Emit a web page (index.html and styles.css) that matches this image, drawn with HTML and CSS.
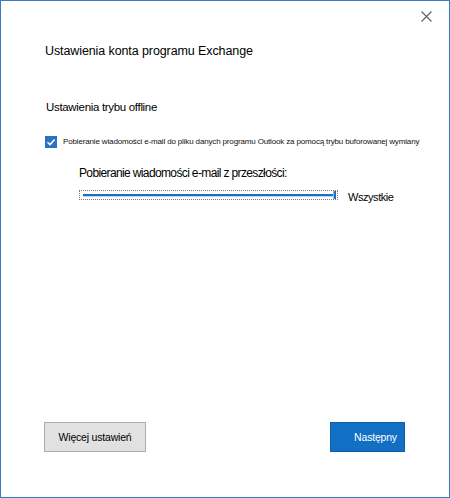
FILE: index.html
```html
<!DOCTYPE html>
<html lang="pl">
<head>
<meta charset="utf-8">
<title>Ustawienia konta programu Exchange</title>
<link rel="stylesheet" href="styles.css">
</head>
<body>
<div class="window">
  <button class="close" aria-label="Zamknij">
    <svg width="11" height="11" viewBox="0 0 11 11"><path d="M0.5 0.5L10.5 10.5M10.5 0.5L0.5 10.5" stroke="#5f5f5f" stroke-width="1.1" fill="none"/></svg>
  </button>
  <div class="content">
    <h1 class="title">Ustawienia konta programu Exchange</h1>
    <h2 class="subtitle">Ustawienia trybu offline</h2>
    <label class="check-row">
      <span class="checkbox">
        <svg width="12" height="12" viewBox="0 0 12 12"><path d="M2.5 6.2L5 8.6L9.6 3.6" stroke="#fff" stroke-width="1.5" fill="none"/></svg>
      </span>
      <span class="check-label">Pobieranie wiadomości e-mail do pliku danych programu Outlook za pomocą trybu buforowanej wymiany</span>
    </label>
    <div class="past">
      <div class="past-label">Pobieranie wiadomości e-mail z przeszłości:</div>
      <div class="slider-row">
        <div class="slider">
          <div class="track"></div>
          <div class="thumb"></div>
        </div>
        <span class="slider-value">Wszystkie</span>
      </div>
    </div>
  </div>
  <div class="footer">
    <button class="btn btn-secondary">Więcej ustawień</button>
    <button class="btn btn-primary">Następny</button>
  </div>
</div>
</body>
</html>
```
FILE: styles.css
```css
html, body {
  margin: 0;
  padding: 0;
  background: #ffffff;
}
body {
  font-family: "Liberation Sans", Arial, sans-serif;
  color: #000;
}
.window {
  position: relative;
  width: 450px;
  height: 498px;
  box-sizing: border-box;
  border: 1px solid #3a7ebf;
  background: #fff;
  display: flex;
  flex-direction: column;
}
.close {
  position: absolute;
  top: 9px;
  right: 16px;
  width: 13px;
  height: 13px;
  padding: 1px;
  border: 0;
  background: transparent;
  display: flex;
  align-items: center;
  justify-content: center;
}
.content {
  flex: 1;
  padding-left: 44px;
  padding-top: 42px;
}
.title {
  margin: 0;
  font-size: 12.5px;
  font-weight: normal;
  line-height: 17px;
  letter-spacing: -0.1px;
}
.subtitle {
  margin: 39px 0 0 1px;
  font-size: 11.5px;
  font-weight: normal;
  line-height: 16px;
  letter-spacing: -0.32px;
}
.check-row {
  display: flex;
  align-items: center;
  margin-top: 21px;
  gap: 6px;
}
.checkbox {
  width: 12px;
  height: 12px;
  background: #2a73c2;
  display: flex;
  align-items: center;
  justify-content: center;
}
.check-label {
  font-size: 8px;
  line-height: 12px;
  letter-spacing: -0.15px;
  color: #111;
}
.past {
  padding-left: 34px;
  margin-top: 17px;
}
.past-label {
  font-size: 12px;
  line-height: 16px;
  letter-spacing: -0.63px;
}
.slider-row {
  display: flex;
  align-items: center;
  margin-top: 4px;
  gap: 10px;
}
.slider {
  position: relative;
  width: 257px;
  height: 8px;
  border: 1px dotted #7a7a7a;
  display: flex;
  align-items: center;
}
.track {
  margin: 0 3px 0 3px;
  flex: 1;
  height: 2px;
  background: #1e6fc0;
  box-shadow: 0 1px 0 #b9d3ee;
}
.thumb {
  position: absolute;
  right: 1px;
  top: 0;
  width: 2px;
  height: 8px;
  background: #1e6fc0;
  border-left: 1px solid #9cbfe3;
}
.slider-value {
  font-size: 11px;
  letter-spacing: -0.45px;
  line-height: 16px;
  margin-top: 4px;
}
.footer {
  display: flex;
  justify-content: space-between;
  padding: 0 44px 45px 43px;
}
.btn {
  height: 30px;
  font-family: "Liberation Sans", Arial, sans-serif;
  font-size: 10.5px;
  letter-spacing: -0.2px;
  cursor: default;
}
.btn-secondary {
  width: 102px;
  background: #e1e1e1;
  border: 1px solid #adadad;
  color: #000;
}
.btn-primary {
  width: 75px;
  background: #1170c4;
  border: 1px solid #0d5fa8;
  color: #fff;
  padding: 0 6px 0 22px;
}
```
